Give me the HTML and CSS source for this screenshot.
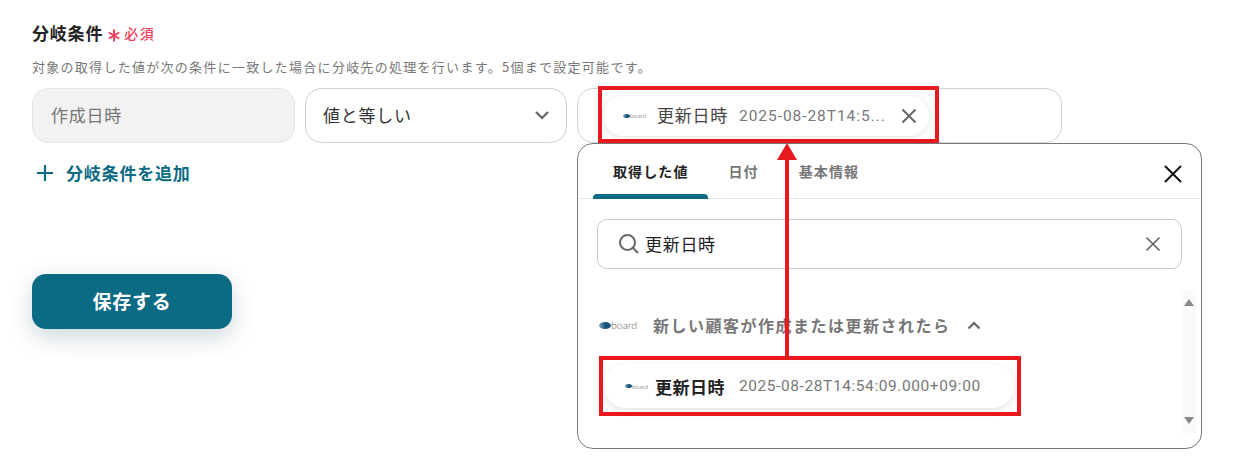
FILE: index.html
```html
<!DOCTYPE html>
<html lang="ja">
<head>
<meta charset="utf-8">
<title>分岐条件</title>
<link rel="stylesheet" href="styles.css">
</head>
<body>
<main class="form">
  <div class="label-row">
    <span class="label">分岐条件</span>
    <svg class="req-star" width="12" height="13" viewBox="0 0 12 13"><path d="M6 0.500v12M0.800 3.500l10.400 6M11.200 3.500l-10.400 6" stroke="#f0405a" stroke-width="2"/></svg>
    <span class="req">必須</span>
  </div>
  <p class="desc">対象の取得した値が次の条件に一致した場合に分岐先の処理を行います。5個まで設定可能です。</p>
  <div class="cond-row">
    <div class="field field-disabled">作成日時</div>
    <div class="field field-select">
      <span>値と等しい</span>
      <svg class="chev" width="16" height="10" viewBox="0 0 16 10"><path d="M2 2l6 6 6-6" fill="none" stroke="#666" stroke-width="2.2"/></svg>
    </div>
    <div class="field field-value">
      <div class="chip chip-top">
        <span class="logo logo-s"><i></i>board</span>
        <span class="chip-name">更新日時</span>
        <span class="chip-val">2025-08-28T14:5...</span>
        <svg class="chip-x" width="16" height="16" viewBox="0 0 16 16"><path d="M1.500 1.500l13 13M14.500 1.500l-13 13" stroke="#666" stroke-width="1.800"/></svg>
      </div>
    </div>
  </div>
  <div class="add">
    <svg width="18" height="18" viewBox="0 0 18 18"><path d="M9 1v16M1 9h16" stroke="#0b6b84" stroke-width="2.2"/></svg>
    <span>分岐条件を追加</span>
  </div>
  <button class="save" type="button">保存する</button>
</main>

<section class="popup">
  <div class="tabs">
    <span class="tab tab-active">取得した値</span>
    <span class="tab">日付</span>
    <span class="tab">基本情報</span>
    <svg class="popup-x" width="20" height="20" viewBox="0 0 20 20"><path d="M2 2l16 16M18 2L2 18" stroke="#111" stroke-width="2"/></svg>
  </div>
  <div class="search">
    <svg width="22" height="22" viewBox="0 0 22 22"><circle cx="9.500" cy="9.500" r="7.500" fill="none" stroke="#666" stroke-width="2"/><path d="M15 15l5 5" stroke="#666" stroke-width="2"/></svg>
    <span class="search-text">更新日時</span>
    <svg class="search-x" width="16" height="16" viewBox="0 0 16 16"><path d="M1.500 1.500l13 13M14.500 1.500l-13 13" stroke="#666" stroke-width="1.700"/></svg>
  </div>
  <div class="results">
    <div class="list">
      <div class="group">
        <span class="logo logo-l"><i></i>board</span>
        <span class="group-name">新しい顧客が作成または更新されたら</span>
        <svg width="14" height="9" viewBox="0 0 14 9"><path d="M1.500 7.500L7 2l5.500 5.500" fill="none" stroke="#666" stroke-width="2.200"/></svg>
      </div>
      <div class="chip chip-list">
        <span class="logo logo-s"><i></i>board</span>
        <span class="chip-name-strong">更新日時</span>
        <span class="chip-val">2025-08-28T14:54:09.000+09:00</span>
      </div>
    </div>
    <div class="scrollbar">
      <span class="arrow-up"></span>
      <span class="arrow-down"></span>
    </div>
  </div>
</section>

<div class="mark mark-top"></div>
<div class="mark mark-bottom"></div>
<div class="red-line"></div>
<div class="red-head"></div>
</body>
</html>
```
FILE: styles.css
```css
* { box-sizing: border-box; }
html, body { margin: 0; height: 100%; }
body {
  position: relative;
  width: 1234px;
  height: 474px;
  overflow: hidden;
  background: #fff;
  font-family: "Noto Sans CJK JP", "Noto Sans", sans-serif;
  color: #222;
}
.form { padding: 20px 0 0 32px; }
.label-row { display: flex; align-items: center; height: 26px; }
.label { font-size: 17px; letter-spacing: .8px; font-weight: 700; color: #222; line-height: 26px; }
.req-star { margin: 4px 0 0 5px; flex: none; }
.req { color: #f0405a; font-size: 14px; letter-spacing: 1.500px; font-weight: 500; margin-left: 4px; line-height: 26px; }
.desc { margin: 12px 0 0; font-size: 13px; letter-spacing: 1.280px; line-height: 18px; color: #777; white-space: nowrap; }
.cond-row { display: flex; gap: 10px; margin-top: 12px; height: 55px; }
.field {
  height: 55px;
  padding-bottom: 2px;
  border: 1px solid #c9cfd8;
  border-radius: 16px;
  display: flex;
  align-items: center;
  font-size: 17px;
  letter-spacing: .75px;
}
.field-disabled { width: 263px; background: #f2f2f2; color: #777; padding-left: 18px; border-color: #e2e4e8; }
.field-select { width: 262px; padding: 0 16px 2px 17px; justify-content: space-between; color: #333; }
.field-value { width: 485px; padding: 0 0 0 25px; border-color: #cfd4dc; }
.chip {
  display: flex;
  align-items: center;
  background: #fff;
  border-radius: 22px;
}
.chip-top {
  width: 326px;
  height: 40px;
  padding: 0 12px 0 20px;
  box-shadow: 0 1px 6px rgba(0, 0, 0, .12);
}
.logo {
  display: inline-flex;
  align-items: center;
  font-family: "Lato", sans-serif;
  font-weight: 300;
  color: #444;
  flex: none;
  letter-spacing: 0;
}
.logo i { display: block; flex: none; background: linear-gradient(90deg, #7fa6b8, #14557a 55%); border-radius: 50%; }
.logo-s { width: 24px; font-size: 6.500px; }
.logo-s i { width: 7px; height: 4px; margin-right: 0; }
.logo-l { width: 38px; font-size: 10.500px; color: #555; }
.logo-l i { width: 12px; height: 7px; margin-right: 0; }
.chip-name { font-size: 17px; letter-spacing: .75px; color: #444; margin: 0 0 2px 10px; }
.chip-val {
  font-family: "Roboto", sans-serif;
  font-size: 15.500px;
  letter-spacing: .950px;
  color: #777;
  margin-left: 11px;
  white-space: nowrap;
}
.chip-x { margin-left: auto; }
.add { display: flex; align-items: center; gap: 12px; margin: 18px 0 0 4px; height: 24px; color: #0b6b84; font-size: 17px; letter-spacing: .8px; font-weight: 700; }
.add span { margin-bottom: 2px; }
.save {
  display: block;
  margin-top: 89px;
  width: 200px;
  height: 55px;
  padding: 0 0 2px;
  border: 0;
  border-radius: 14px;
  background: #0b6b84;
  color: #fff;
  font-family: inherit;
  font-size: 19px;
  letter-spacing: .7px;
  font-weight: 700;
  box-shadow: 0 8px 24px rgba(10, 50, 70, .2);
}
.popup {
  position: absolute;
  left: 577px;
  top: 143px;
  width: 625px;
  height: 306px;
  background: #fff;
  border: 1px solid #777;
  border-radius: 16px;
}
.tabs {
  display: flex;
  align-items: center;
  position: relative;
  height: 55px;
  margin: 0 1px;
  padding: 0 0 0 34px;
  gap: 40px;
  border-bottom: 1px solid #e6e6e6;
  font-size: 14px;
  letter-spacing: 1.100px;
  font-weight: 700;
  color: #777;
}
.tab { position: relative; line-height: 55px; height: 55px; white-space: nowrap; }
.tab-active { color: #222; }
.tab-active::after {
  content: "";
  position: absolute;
  left: -20px;
  right: -19px;
  bottom: 0;
  height: 5px;
  background: #0b6b84;
  border-radius: 4px 4px 0 0;
}
.popup-x { position: absolute; right: 17px; top: 20px; }
.search {
  display: flex;
  align-items: center;
  margin: 20px 19px 0;
  height: 50px;
  padding: 0 20px;
  border: 1px solid #c8c8c8;
  border-radius: 10px;
  font-size: 17px;
  letter-spacing: .7px;
  color: #222;
}
.search-text { margin: 0 0 2px 5px; }
.search-x { margin-left: auto; }
.results { display: flex; margin-top: 21px; padding-right: 5px; }
.list { flex: 1; padding-left: 21px; }
.group { display: flex; align-items: center; height: 30px; margin-top: 20px; font-size: 16px; letter-spacing: 1.500px; font-weight: 700; color: #777; }
.group-name { margin-left: 16px; margin-right: 16px; white-space: nowrap; }
.chip-list {
  width: 410px;
  height: 44px;
  margin: 24px 0 0 5px;
  padding-left: 21px;
  box-shadow: 0 3px 10px rgba(0, 0, 0, .1);
}
.chip-name-strong { font-size: 17px; letter-spacing: .5px; font-weight: 700; color: #222; margin-left: 6px; }
.chip-list .chip-val { margin-left: 14px; letter-spacing: .580px; }
.scrollbar {
  width: 15px;
  height: 143px;
  background: #fafafa;
  display: flex;
  flex-direction: column;
  justify-content: space-between;
  align-items: center;
  padding: 9px 0;
}
.arrow-up { border: 5px solid transparent; border-top: 0; border-bottom: 7px solid #888; }
.arrow-down { border: 5px solid transparent; border-bottom: 0; border-top: 7px solid #888; }
.mark { position: absolute; border: 4px solid #e8191e; }
.mark-top { left: 598px; top: 86px; width: 341px; height: 57px; }
.mark-bottom { left: 599px; top: 356px; width: 422px; height: 60px; }
.red-line { position: absolute; left: 785px; top: 158px; width: 4px; height: 199px; background: #e8191e; }
.red-head {
  position: absolute;
  left: 777px;
  top: 143px;
  border: 10px solid transparent;
  border-top: 0;
  border-bottom: 17px solid #e8191e;
}
```
